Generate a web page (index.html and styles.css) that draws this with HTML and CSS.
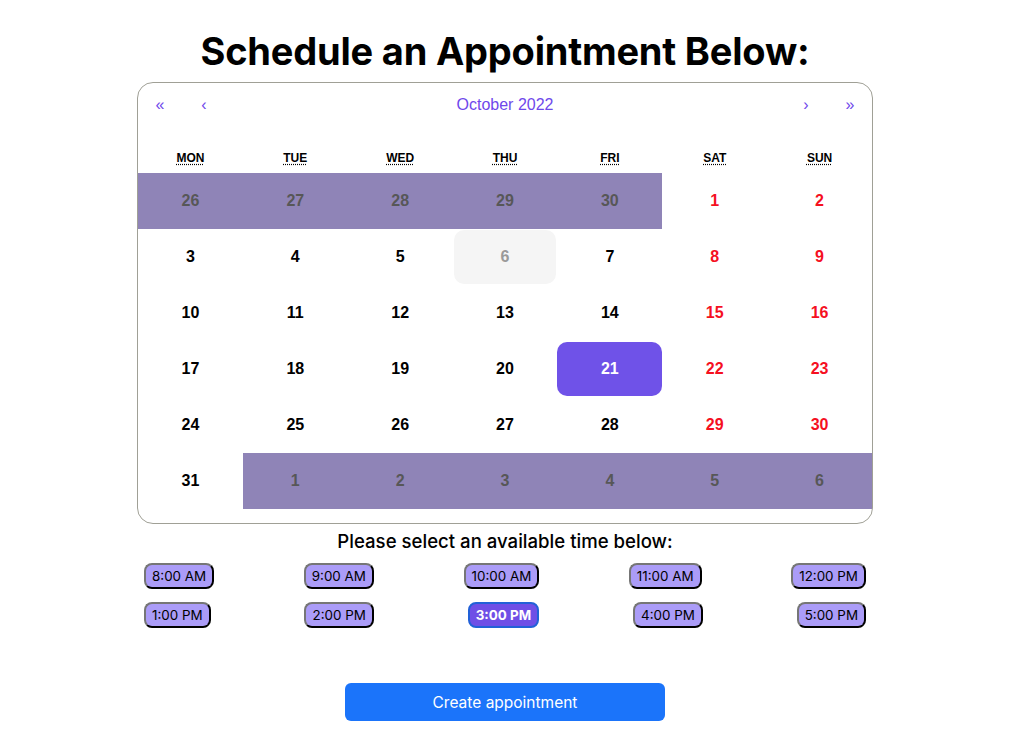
FILE: index.html
```html
<!DOCTYPE html>
<html>
<head>
<meta charset="utf-8">
<link rel="stylesheet" href="styles.css">
</head>
<body>
<div class="page">
  <h1 class="title">Schedule an Appointment Below:</h1>
  <div class="calendar">
    <div class="nav">
      <button class="nav-btn">«</button>
      <button class="nav-btn">‹</button>
      <button class="nav-label">October 2022</button>
      <button class="nav-btn">›</button>
      <button class="nav-btn">»</button>
    </div>
    <div class="weekdays">
      <div class="wd"><abbr title="Monday">Mon</abbr></div>
      <div class="wd"><abbr title="Tuesday">Tue</abbr></div>
      <div class="wd"><abbr title="Wednesday">Wed</abbr></div>
      <div class="wd"><abbr title="Thursday">Thu</abbr></div>
      <div class="wd"><abbr title="Friday">Fri</abbr></div>
      <div class="wd"><abbr title="Saturday">Sat</abbr></div>
      <div class="wd"><abbr title="Sunday">Sun</abbr></div>
    </div>
    <div class="days">
      <div class="tile other">26</div><div class="tile other">27</div><div class="tile other">28</div><div class="tile other">29</div><div class="tile other">30</div><div class="tile weekend">1</div><div class="tile weekend">2</div>
      <div class="tile">3</div><div class="tile">4</div><div class="tile">5</div><div class="tile disabled">6</div><div class="tile">7</div><div class="tile weekend">8</div><div class="tile weekend">9</div>
      <div class="tile">10</div><div class="tile">11</div><div class="tile">12</div><div class="tile">13</div><div class="tile">14</div><div class="tile weekend">15</div><div class="tile weekend">16</div>
      <div class="tile">17</div><div class="tile">18</div><div class="tile">19</div><div class="tile">20</div><div class="tile active">21</div><div class="tile weekend">22</div><div class="tile weekend">23</div>
      <div class="tile">24</div><div class="tile">25</div><div class="tile">26</div><div class="tile">27</div><div class="tile">28</div><div class="tile weekend">29</div><div class="tile weekend">30</div>
      <div class="tile">31</div><div class="tile other">1</div><div class="tile other">2</div><div class="tile other">3</div><div class="tile other">4</div><div class="tile other">5</div><div class="tile other">6</div>
    </div>
  </div>
  <p class="subtitle">Please select an available time below:</p>
  <div class="times">
    <div class="time-row">
      <button class="time">8:00 AM</button>
      <button class="time">9:00 AM</button>
      <button class="time">10:00 AM</button>
      <button class="time">11:00 AM</button>
      <button class="time">12:00 PM</button>
    </div>
    <div class="time-row">
      <button class="time">1:00 PM</button>
      <button class="time">2:00 PM</button>
      <button class="time selected">3:00 PM</button>
      <button class="time">4:00 PM</button>
      <button class="time">5:00 PM</button>
    </div>
  </div>
  <button class="create">Create appointment</button>
</div>
</body>
</html>
```
FILE: styles.css
```css
html, body {
  margin: 0;
  padding: 0;
  background: #fff;
}
.page {
  width: 1010px;
  display: flex;
  flex-direction: column;
  align-items: center;
  font-family: Inter, "Liberation Sans", sans-serif;
  color: #000;
}
.title {
  margin: 22px 0 2px 0;
  font-size: 38px;
  line-height: 58px;
  font-weight: 700;
  letter-spacing: -0.2px;
}
.calendar {
  width: 734px;
  border: 1px solid #a0a096;
  border-radius: 16px;
  font-family: "Liberation Sans", Arial, sans-serif;
  padding-bottom: 14px;
  overflow: hidden;
  background: #fff;
}
.nav {
  display: flex;
  height: 44px;
  margin-bottom: 16px;
}
.nav button {
  background: none;
  border: 0;
  color: #6f48eb;
  font-family: "Liberation Sans", Arial, sans-serif;
  font-size: 16px;
  padding: 0;
  min-width: 44px;
}
.nav .nav-label {
  flex: 1;
}
.weekdays {
  display: grid;
  grid-template-columns: repeat(7, 1fr);
  height: 30px;
  align-items: center;
}
.wd {
  text-align: center;
  font-size: 12px;
  font-weight: 700;
  text-transform: uppercase;
}
.wd abbr {
  text-decoration: underline dotted;
  text-underline-offset: 2px;
}
.days {
  display: grid;
  grid-template-columns: repeat(7, 1fr);
  grid-auto-rows: 56px;
}
.tile {
  display: flex;
  align-items: center;
  justify-content: center;
  font-size: 16px;
  font-weight: 700;
  color: #000;
}
.tile.weekend {
  color: #f5101f;
}
.tile.other {
  background: #8f84b7;
  color: #575757;
}
.tile.disabled {
  background: #f5f5f5;
  color: #9a9a9a;
  border-radius: 10px;
  margin: 1px;
}
.tile.active {
  background: #6f52e8;
  color: #fff;
  border-radius: 10px;
  margin: 1px 0;
}
.subtitle {
  margin: 5px 0 0 0;
  font-size: 18.6px;
  line-height: 24px;
  font-weight: 500;
}
.times {
  width: 722px;
  display: flex;
  flex-direction: column;
  gap: 13px;
  margin-top: 10px;
}
.time-row {
  display: flex;
  justify-content: space-between;
}
.time {
  font-family: Inter, "Liberation Sans", sans-serif;
  font-size: 13.4px;
  line-height: 16px;
  padding: 3px 6px;
  background: #ab9cf8;
  color: #000;
  border: 2px outset #555;
  border-color: #767676 #3a3a3a #2a2a2a #767676;
  border-radius: 8px;
}
.time.selected {
  background: #6f4fe6;
  color: #fff;
  font-weight: 700;
  border-color: #2261d8;
  border-style: solid;
}
.create {
  margin-top: 55px;
  width: 320px;
  height: 38px;
  border: 0;
  border-radius: 6px;
  background: #1b74fa;
  color: #fff;
  font-family: Inter, "Liberation Sans", sans-serif;
  font-size: 15.5px;
}
```
